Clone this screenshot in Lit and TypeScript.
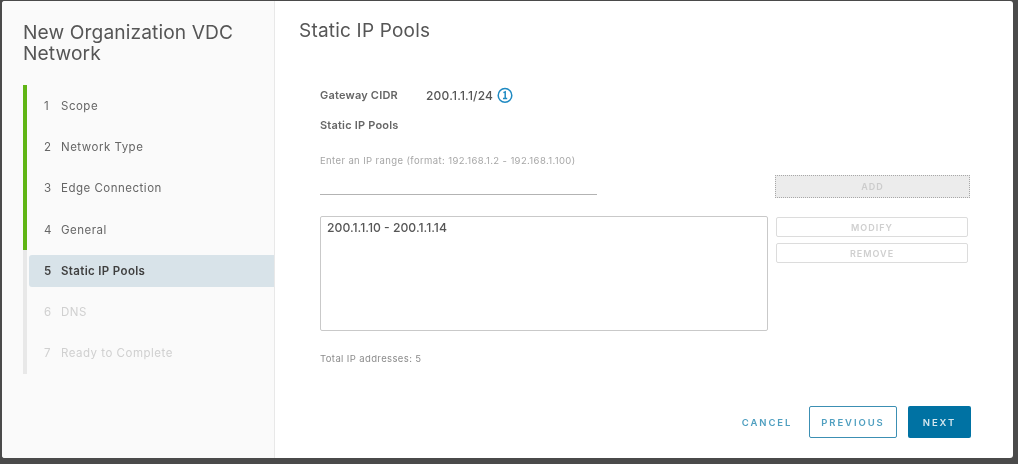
import { LitElement, html, css } from "lit";
import { customElement } from "lit/decorators.js";

const steps = [
  { n: 1, label: "Scope", state: "done" },
  { n: 2, label: "Network Type", state: "done" },
  { n: 3, label: "Edge Connection", state: "done" },
  { n: 4, label: "General", state: "done" },
  { n: 5, label: "Static IP Pools", state: "active" },
  { n: 6, label: "DNS", state: "off" },
  { n: 7, label: "Ready to Complete", state: "off" },
];

@customElement("app-root")
export class AppRoot extends LitElement {
  static styles = css`
    :host { display: block; width: 1023px; height: 467px; background: #fff; overflow: hidden;
      font-family: "Inter", "Open Sans", sans-serif; color: #565656; }
    .backdrop { width: 1018px; height: 464px; box-sizing: border-box; background: #4a4a4a; padding: 1px 5px 6px 2px; filter: blur(0.45px); }
    .modal { height: 100%; display: flex; background: #fff; border-radius: 3px; overflow: hidden; }
    .side { width: 273px; flex: none; box-sizing: border-box; background: #fafafa; border-right: 1px solid #e8e8e8; padding: 21px 0 0 21px; }
    h1 { margin: 0; font-size: 19.2px; line-height: 21px; font-weight: 400; color: #565656; width: 240px; letter-spacing: 0.1px; }
    .steps { margin-top: 21px; display: flex; flex-direction: column; }
    .step { height: 41.3px; display: flex; border-left: 4px solid #e8e8e8; box-sizing: border-box; font-size: 11.5px; letter-spacing: 0.5px; color: #666; }
    .step.done { border-left-color: #60b515; }
    .step .inner { flex: 1; margin-left: 2px; display: flex; align-items: center; padding-left: 15px; }
    .step .num { width: 17px; }
    .step.active { letter-spacing: 0.35px; }
    .step.active .inner { background: #d8e3e9; border-radius: 3px 0 0 3px; height: 32px; align-self: center; font-weight: 600; color: #3f3f3f; }
    .step.off { color: #d0d0d0; }
    .main { flex: 1; padding: 19px 0 0 24px; position: relative; min-width: 0; }
    h2 { margin: 0; font-size: 19px; line-height: 22px; font-weight: 400; color: #565656; letter-spacing: 0.2px; }
    .form { margin: 44px 0 0 21px; }
    .cidr { display: flex; align-items: center; height: 18px; }
    .label { font-weight: 600; color: #666; font-size: 11px; letter-spacing: 0.2px; }
    .cidr .label { width: 106px; }
    .cidr .val { font-weight: 500; margin-right: 4px; font-size: 12px; color: #565656; letter-spacing: 0.2px; }
    .cidr svg { display: block; }
    .pools { margin-top: 14px; line-height: 14px; }
    .hint { margin-top: 23px; font-size: 9.5px; line-height: 12px; color: #a6a6a6; letter-spacing: 0.38px; }
    .row { display: flex; }
    .left { width: 445px; flex: none; }
    .input { width: 277px; height: 28px; border-bottom: 1px solid #b3b3b3; box-sizing: border-box; }
    .btn { box-sizing: border-box; display: flex; align-items: center; justify-content: center; font-size: 9px; letter-spacing: 1px; font-weight: 600; border-radius: 2px; }
    .add { margin: 8px 0 0 10px; width: 195px; height: 23px; background: #ececec; border: 1px dotted #a8a8a8; color: #cccccc; border-radius: 0; }
    .list-row { margin-top: 18px; }
    .list { width: 448px; height: 115px; box-sizing: border-box; border: 1px solid #c9c9c9; border-radius: 2px; padding: 3px 6px; font-size: 12.2px; line-height: 15px; color: #565656; font-weight: 500; }
    .side-btns { margin: 1px 0 0 8px; display: flex; flex-direction: column; gap: 6px; }
    .ghost { width: 192px; height: 20px; border: 1px solid #dcdcdc; color: #cfcfcf; background: #fff; }
    .total { margin-top: 22px; font-size: 9.5px; line-height: 12px; color: #8c8c8c; letter-spacing: 0.38px; }
    .actions { position: absolute; right: 42px; bottom: 20px; display: flex; align-items: center; }
    .actions .btn { height: 32px; font-size: 9.5px; letter-spacing: 1.9px; }
    .cancel { color: #4f9fc0; width: 50px; margin-right: 17px; }
    .prev { width: 88px; border: 1.5px solid #3c8fb3; color: #4f9fc0; margin-right: 11px; background: #fff; }
    .next { width: 63px; background: #0072a3; color: #d3e6ee; }
  `;

  render() {
    return html`<div class="backdrop">
      <div class="modal">
        <div class="side">
          <h1>New Organization VDC Network</h1>
          <div class="steps">
            ${steps.map(
              (s) => html`<div class="step ${s.state}">
                <div class="inner"><span class="num">${s.n}</span><span>${s.label}</span></div>
              </div>`
            )}
          </div>
        </div>
        <div class="main">
          <h2>Static IP Pools</h2>
          <div class="form">
            <div class="cidr">
              <span class="label">Gateway CIDR</span>
              <span class="val">200.1.1.1/24</span>
              <svg width="16" height="16" viewBox="0 0 16 16" fill="none" stroke="#1f8ac2">
                <circle cx="8" cy="8.4" r="6.8" stroke-width="1.5"></circle>
                <path d="M6.4 5.6 L8.2 4.8 V11.4 M6 11.6 H10.2" stroke-width="1.5"></path>
              </svg>
            </div>
            <div class="label pools">Static IP Pools</div>
            <div class="hint">Enter an IP range (format: 192.168.1.2 - 192.168.1.100)</div>
            <div class="row">
              <div class="left"><div class="input"></div></div>
              <div class="btn add">ADD</div>
            </div>
            <div class="row list-row">
              <div class="list">200.1.1.10 - 200.1.1.14</div>
              <div class="side-btns">
                <div class="btn ghost">MODIFY</div>
                <div class="btn ghost">REMOVE</div>
              </div>
            </div>
            <div class="total">Total IP addresses: 5</div>
          </div>
          <div class="actions">
            <div class="btn cancel">CANCEL</div>
            <div class="btn prev">PREVIOUS</div>
            <div class="btn next">NEXT</div>
          </div>
        </div>
      </div>
    </div>`;
  }
}
